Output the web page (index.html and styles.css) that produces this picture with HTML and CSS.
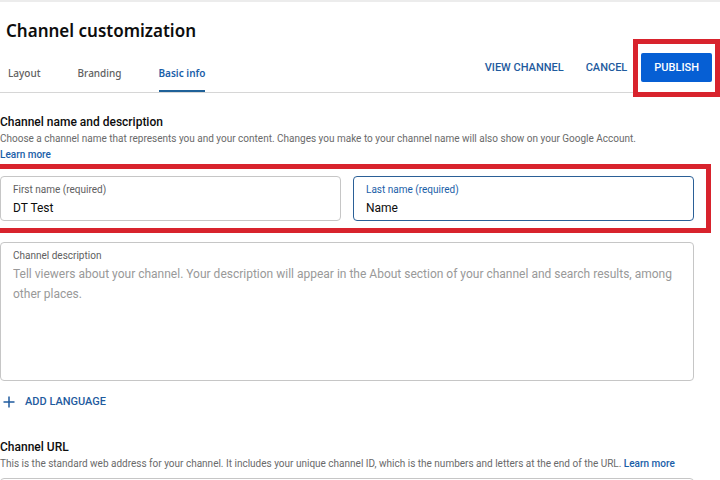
FILE: index.html
```html
<!DOCTYPE html>
<html lang="en">
<head>
<meta charset="utf-8">
<title>Channel customization</title>
<link rel="stylesheet" href="styles.css">
</head>
<body>
<header class="header">
  <h1 class="title">Channel customization</h1>
  <div class="bar">
    <nav class="tabs">
      <a class="tab" href="#layout">Layout</a>
      <a class="tab" href="#branding">Branding</a>
      <a class="tab active" href="#basic">Basic info</a>
    </nav>
    <div class="actions">
      <button class="text-button" type="button">VIEW CHANNEL</button>
      <button class="text-button" type="button">CANCEL</button>
      <div class="publish-wrap"><button class="publish" type="button">PUBLISH</button></div>
    </div>
  </div>
</header>
<main class="content">
  <section>
    <h2 class="heading">Channel name and description</h2>
    <p class="note">Choose a channel name that represents you and your content. Changes you make to your channel name will also show on your Google Account.<br><a class="link" href="#name">Learn more</a></p>
    <div class="names">
      <div class="field">
        <label for="first">First name (required)</label>
        <input id="first" type="text" value="DT Test">
      </div>
      <div class="field focused">
        <label for="last">Last name (required)</label>
        <input id="last" type="text" value="Name">
      </div>
    </div>
    <div class="field description">
      <label for="description">Channel description</label>
      <textarea id="description" placeholder="Tell viewers about your channel. Your description will appear in the About section of your channel and search results, among other places."></textarea>
    </div>
    <button class="text-button add" type="button">
      <svg class="plus" viewBox="0 0 12 12" aria-hidden="true"><path d="M6 0.5v11M0.5 6h11"/></svg>
      ADD LANGUAGE
    </button>
  </section>
  <section class="url">
    <h2 class="heading">Channel URL</h2>
    <p class="note">This is the standard web address for your channel. It includes your unique channel ID, which is the numbers and letters at the end of the URL. <a class="link" href="#url">Learn more</a></p>
    <div class="field url-field"><input type="text" aria-label="Channel URL" readonly></div>
  </section>
</main>
</body>
</html>
```
FILE: styles.css
```css
* { box-sizing: border-box; }
html { overflow: hidden; }
body {
  margin: 0;
  background: #fff;
  color: #0d0d0d;
  font: 12px/16px Roboto, "Liberation Sans", sans-serif;
}
h1, h2, p { margin: 0; }
button, input, textarea { font: inherit; color: inherit; }
button { border: 0; background: none; padding: 0; cursor: pointer; }
a { text-decoration: none; }

.header { border-top: 2px solid #ececec; border-bottom: 1px solid #d6d6d6; }
.title {
  padding: 17px 6px 0;
  font: 600 17px/24px "Noto Sans", "Open Sans", sans-serif;
}
.bar { display: flex; justify-content: space-between; height: 49px; padding: 0 8px; }
.tabs { display: flex; align-items: flex-end; gap: 37px; }
.tab {
  display: flex;
  align-items: center;
  height: 37px;
  border-bottom: 2px solid transparent;
  color: #606060;
  font: 500 10px/16px "Noto Sans", sans-serif;
}
.tab.active { color: #1a5ea8; border-color: #1f6198; font-weight: 600; }
.actions { display: flex; align-items: center; gap: 22px; }
.text-button { color: #1f5b9e; font-size: 11px; font-weight: 500; }
.publish-wrap { position: relative; margin-left: -8px; }
.publish {
  display: block;
  height: 29px;
  padding: 0 13px;
  border-radius: 2px;
  background: #065fd4;
  color: #fff;
  font-size: 11px;
  font-weight: 500;
}
.publish-wrap::after, .names::after {
  content: "";
  position: absolute;
  border: 5px solid #d8232d;
  pointer-events: none;
}
.publish-wrap::after { inset: -14px -8px -15px; }
.names::after { inset: -12px -17px -12px -8px; }

.content { padding: 20px 26px 0 0; }
.heading { font-size: 12px; line-height: 18px; font-weight: 500; }
.note { color: #6a6a6a; font-size: 10px; line-height: 16px; white-space: nowrap; }
.link { color: #1a5ea8; font-weight: 500; }
.names {
  position: relative;
  display: grid;
  grid-template-columns: 341fr 341fr;
  gap: 12px;
  margin-top: 13px;
}
.field { border: 1px solid #c6c6c6; border-radius: 4px; padding: 5px 12px 3px; }
.field label { display: block; color: #606060; font-size: 10px; line-height: 16px; }
.field input, .field textarea {
  display: block;
  width: 100%;
  border: 0;
  padding: 0;
  outline: 0;
  background: none;
}
.field input { height: 19px; }
.focused { border-color: #2b6097; }
.focused label { color: #1a5ea8; }
.description { margin-top: 21px; }
.field textarea { height: 113px; line-height: 20px; resize: none; overflow: hidden; }
.field textarea::placeholder { color: #999; opacity: 1; }
.add { display: flex; align-items: center; gap: 10px; margin-top: 13px; padding-left: 3px; }
.plus { width: 12px; height: 12px; fill: none; stroke: #1f5b9e; stroke-width: 1.5; }
.url { margin-top: 28px; }
.url-field { margin-top: 6px; }
```
